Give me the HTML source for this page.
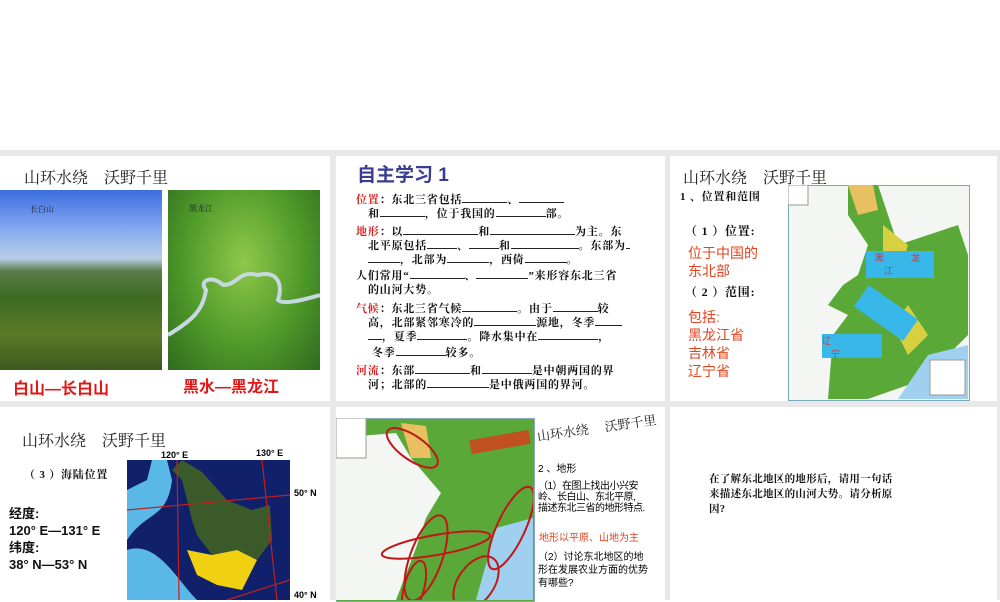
<!DOCTYPE html>
<html><head><meta charset="utf-8"><style>
body{margin:0;width:1000px;height:600px;position:relative;overflow:hidden;background:#fff;font-family:"Liberation Sans","Noto Sans CJK SC",sans-serif}
.a{position:absolute}
.g{background:#e8e8e8}
.serif{font-family:"Liberation Serif","Noto Serif CJK SC",serif}
.t{font-size:16px;color:#222}
.k{font-family:"Liberation Serif","Noto Serif CJK SC",serif;font-weight:bold;font-size:11px;line-height:14px;color:#111;letter-spacing:0.8px;white-space:nowrap}
.r{color:#d82020}
.u{display:inline-block;border-bottom:1px solid #222;height:9px}
</style></head><body>
<div class="a g" style="left:0;top:150px;width:1000px;height:6px"></div>
<div class="a g" style="left:0;top:401px;width:1000px;height:6px"></div>
<div class="a g" style="left:330px;top:150px;width:6px;height:450px"></div>
<div class="a g" style="left:665px;top:150px;width:5px;height:450px"></div>
<div class="a g" style="left:997px;top:150px;width:3px;height:450px"></div>

<!-- P1 -->
<div class="a serif t" style="left:24px;top:165px">山环水绕　沃野千里</div>
<div class="a" style="left:0;top:190px;width:162px;height:180px;background:linear-gradient(180deg,#3d6ee0 0%,#7ea4ee 20%,#b9cfe8 38%,#5b7c4a 45%,#3e6a22 60%,#5a7a28 80%,#3a5a1e 100%)"></div>
<div class="a serif" style="left:30px;top:204px;font-size:8px;color:#223">长白山</div>
<div class="a" style="left:168px;top:190px;width:152px;height:180px;background:radial-gradient(ellipse at 50% 40%,#8fc84a,#4f9a2a 55%,#2f6a1e)"></div>
<svg class="a" style="left:168px;top:190px" width="152" height="180"><path d="M0 145 C25 130 35 120 38 100 C30 90 45 85 55 95 C70 95 70 80 90 85 C110 80 115 95 110 110 C115 115 135 110 152 105" stroke="#c8d8e0" stroke-width="4" fill="none"/></svg>
<div class="a serif" style="left:189px;top:203px;font-size:8px;color:#223">黑龙江</div>
<div class="a" style="left:13px;top:375px;font-size:16px;font-weight:bold;color:#e01818">白山—长白山</div>
<div class="a" style="left:183px;top:373px;font-size:16px;font-weight:bold;color:#e01818">黑水—黑龙江</div>

<!-- P2 -->
<div class="a" style="left:357px;top:160px;font-size:19px;font-weight:bold;color:#3a3d90">自主学习 1</div>
<div class="a k" style="left:356px;top:193px;width:300px">
<div><span class="r">位置</span>：东北三省包括<span class="u" style="width:45px"></span>、<span class="u" style="width:45px"></span></div>
<div style="padding-left:12px">和<span class="u" style="width:45px"></span>，位于我国的<span class="u" style="width:50px"></span>部。</div>
<div style="margin-top:4px"><span class="r">地形</span>：以<span class="u" style="width:75px"></span>和<span class="u" style="width:85px"></span>为主。东</div>
<div style="padding-left:12px">北平原包括<span class="u" style="width:30px"></span>、<span class="u" style="width:30px"></span>和<span class="u" style="width:68px"></span>。东部为<span class="u" style="width:4px"></span></div>
<div style="padding-left:12px"><span class="u" style="width:32px"></span>，北部为<span class="u" style="width:42px"></span>，西倚<span class="u" style="width:42px"></span>。</div>
<div style="margin-top:2px">人们常用“<span class="u" style="width:55px"></span>、<span class="u" style="width:52px"></span>”来形容东北三省</div>
<div style="padding-left:12px">的山河大势。</div>
<div style="margin-top:5px"><span class="r">气候</span>：东北三省气候<span class="u" style="width:55px"></span>。由于<span class="u" style="width:45px"></span>较</div>
<div style="padding-left:12px">高，北部紧邻寒冷的<span class="u" style="width:62px"></span>源地，冬季<span class="u" style="width:27px"></span></div>
<div style="padding-left:12px"><span class="u" style="width:14px"></span>，夏季<span class="u" style="width:50px"></span>。降水集中在<span class="u" style="width:60px"></span>，</div>
<div style="padding-left:16px;margin-top:2px">冬季<span class="u" style="width:50px"></span>较多。</div>
<div style="margin-top:4px"><span class="r">河流</span>：东部<span class="u" style="width:55px"></span>和<span class="u" style="width:50px"></span>是中朝两国的界</div>
<div style="padding-left:12px">河；北部的<span class="u" style="width:62px"></span>是中俄两国的界河。</div>
</div>

<!-- P3 -->
<div class="a serif t" style="left:683px;top:165px">山环水绕　沃野千里</div>
<div class="a k" style="left:680px;top:190px;font-size:11px">1 、位置和范围</div>
<div class="a k" style="left:685px;top:224px;font-size:12px">（ 1 ）位置:</div>
<div class="a" style="left:688px;top:244px;font-size:14px;line-height:18px;color:#e04420">位于中国的<br>东北部</div>
<div class="a k" style="left:685px;top:285px;font-size:12px">（ 2 ）范围:</div>
<div class="a" style="left:688px;top:308px;font-size:14px;line-height:18px;color:#e04420">包括:<br>黑龙江省<br>吉林省<br>辽宁省</div>
<div class="a" style="left:788px;top:185px;width:180px;height:214px;background:#f4f6f4;border:1px solid #7ab"></div>
<svg class="a" style="left:788px;top:185px" width="180" height="214">
<path d="M60 0 L90 0 L100 30 L110 60 L140 50 L170 40 L180 70 L180 150 L150 180 L120 200 L80 214 L40 214 L45 150 L60 130 L40 120 L55 100 L70 90 L80 60 L60 30 Z" fill="#5aa838"/>
<path d="M60 0 L85 0 L90 25 L70 30 Z" fill="#e8c060"/>
<path d="M95 40 L120 60 L110 90 L95 70Z M120 120 L140 150 L120 170 L105 140Z" fill="#d8d040"/>
<path d="M140 170 L180 160 L180 214 L110 214 Z" fill="#a0d0f0"/>
<rect x="0" y="0" width="20" height="20" fill="#fff" stroke="#999"/>
<rect x="142" y="175" width="35" height="35" fill="#fff" stroke="#999"/>
</svg>
<div class="a" style="left:866px;top:251px;width:68px;height:27px;background:#38b8e8;color:#e03030;font-size:9px">　黑　　　龙<br>　　江</div>
<div class="a" style="left:856px;top:300px;width:60px;height:26px;background:#38b8e8;transform:rotate(35deg)"></div>
<div class="a" style="left:822px;top:334px;width:60px;height:24px;background:#38b8e8;color:#e03030;font-size:9px">辽<br>　宁</div>

<!-- P4 -->
<div class="a serif t" style="left:22px;top:428px">山环水绕　沃野千里</div>
<div class="a k" style="left:24px;top:468px;font-size:11px">（ 3 ）海陆位置</div>
<div class="a" style="left:9px;top:505px;font-size:13px;font-weight:bold;line-height:17px;color:#111">经度:<br>120° E—131° E<br>纬度:<br>38° N—53° N</div>
<div class="a" style="left:161px;top:450px;font-size:9px;font-weight:bold">120° E</div>
<div class="a" style="left:256px;top:448px;font-size:9px;font-weight:bold">130° E</div>
<div class="a" style="left:294px;top:488px;font-size:9px;font-weight:bold">50° N</div>
<div class="a" style="left:294px;top:590px;font-size:9px;font-weight:bold">40° N</div>
<div class="a" style="left:127px;top:460px;width:163px;height:140px;background:#10206a;overflow:hidden">
<svg width="163" height="140"><path d="M0 80 C20 50 40 60 45 20 L40 0 L25 0 L20 20 L0 30Z" fill="#5ab8e8"/><path d="M0 90 C30 80 50 120 70 140 L0 140Z" fill="#5ab8e8"/><path d="M45 10 L55 0 L75 12 L100 40 L125 50 L143 45 L145 80 L130 100 L110 90 L85 95 L70 75 L65 60 L55 20Z" fill="#3a5a2a"/><path d="M60 90 L85 95 L110 90 L130 100 L115 130 L90 125 L70 115Z" fill="#f0d010"/><path d="M0 50 L163 35 M50 0 L52 140 M135 0 L150 140 M100 140 L163 120" stroke="#c02020" stroke-width="1.2"/></svg></div>

<!-- P5 -->
<div class="a" style="left:336px;top:418px;width:197px;height:182px;background:#5aa838;border:1px solid #8ab"></div>
<svg class="a" style="left:336px;top:418px" width="197" height="182">
<path d="M0 20 L60 15 L75 40 L105 75 L90 100 L80 130 L60 182 L0 182Z" fill="#f4f6f4"/>
<path d="M65 5 L90 8 L95 40 L75 40Z" fill="#e8c060"/>
<path d="M160 110 L197 100 L197 182 L140 182Z" fill="#a0d0f0"/>
<rect x="0" y="0" width="30" height="40" fill="#fff" stroke="#999"/>
<g fill="none" stroke="#c01818" stroke-width="2"><ellipse cx="70" cy="50" rx="30" ry="12" transform="rotate(35 105 50)"/><ellipse cx="175" cy="110" rx="14" ry="45" transform="rotate(25 175 110)"/><ellipse cx="100" cy="127" rx="55" ry="10" transform="rotate(-10 100 127)"/><ellipse cx="90" cy="140" rx="16" ry="45" transform="rotate(20 90 140)"/><ellipse cx="140" cy="165" rx="18" ry="30" transform="rotate(35 140 165)"/><ellipse cx="78" cy="170" rx="10" ry="28" transform="rotate(15 78 170)"/></g></svg>
<div class="a" style="left:470px;top:435px;width:60px;height:14px;background:#c05020;transform:rotate(-10deg)"></div>
<div class="a serif" style="left:537px;top:426px;font-size:13px;color:#222;transform:rotate(-8deg);transform-origin:left">山环水绕　 沃野千里</div>
<div class="a" style="left:538px;top:460px;font-size:10px">2 、地形</div>
<div class="a" style="left:538px;top:481px;font-size:10px;line-height:11px;letter-spacing:-0.5px">（1）在图上找出小兴安<br>岭、长白山、东北平原,<br>描述东北三省的地形特点.</div>
<div class="a" style="left:539px;top:529px;font-size:10px;color:#e04420">地形以平原、山地为主</div>
<div class="a" style="left:538px;top:551px;font-size:10px;line-height:13px">（2）讨论东北地区的地<br>形在发展农业方面的优势<br>有哪些?</div>

<!-- P6 -->
<div class="a k" style="left:709px;top:472px;font-size:10.5px;line-height:15px;letter-spacing:0.3px">在了解东北地区的地形后，请用一句话<br>来描述东北地区的山河大势。请分析原<br>因?</div>
</body></html>
